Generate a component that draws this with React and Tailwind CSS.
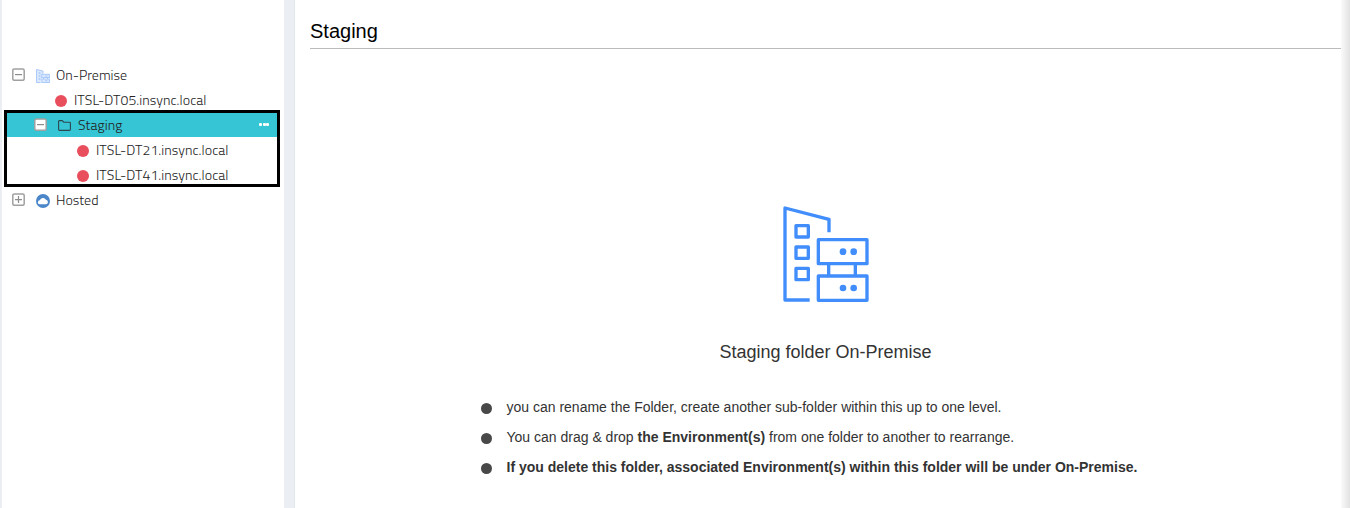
function Toggle({ open }) {
  return (
    <svg className="h-[13px] w-[13px] shrink-0" viewBox="0 0 13 13" fill="none">
      <rect x="0.8" y="0.9" width="11.4" height="11.4" rx="1.5" fill="#fff" stroke="#a0a0a0" strokeWidth="1.5" />
      <path d={open ? 'M3 6.6H10' : 'M3 6.6H10M6.5 3.1V10.1'} stroke="#8c8c8c" strokeWidth="1.2" />
    </svg>
  );
}

function BuildingIcon() {
  return (
    <svg className="h-[14px] w-[14px] shrink-0" viewBox="0 0 14 14" fill="none" stroke="#a9cafb" strokeWidth="1">
      <path d="M4.5 13.5H0.5V0.5L7 2V4.5" fill="#dce9fd" />
      <path d="M2.5 4H4.5M2.5 7H4.5M2.5 10H4.5" strokeWidth="1.5" />
      <rect x="5.8" y="5.3" width="7.6" height="3.2" fill="#dce9fd" />
      <rect x="5.8" y="10" width="7.6" height="3.5" fill="#dce9fd" />
      <path d="M7.5 8.5V10M11.5 8.5V10M9 7H11.5M9 11.8H11.5" />
    </svg>
  );
}

function CloudIcon() {
  return (
    <svg className="h-[14px] w-[14px] shrink-0" viewBox="0 0 14 14">
      <circle cx="7" cy="7" r="7" fill="#4b86c9" />
      <path d="M4 10.3a2 2 0 0 1-.2-4A3.4 3.4 0 0 1 10 5.8a2.3 2.3 0 0 1 .2 4.5Z" fill="#fff" />
    </svg>
  );
}

function FolderIcon() {
  return (
    <svg className="h-[11px] w-[13px] shrink-0" viewBox="0 0 13 11" fill="none" stroke="#2c4650" strokeWidth="1.1" strokeLinejoin="round">
      <path d="M.6 1.3Q.6.6 1.3.6H4.3L5.7 2.2H11.5Q12.4 2.2 12.4 3.1V9.5Q12.4 10.4 11.5 10.4H1.5Q.6 10.4.6 9.5Z" />
    </svg>
  );
}

function Host({ name, nested }) {
  return (
    <div className={nested ? 'flex h-[25px] items-center pl-[75px]' : 'flex h-[25px] items-center pl-[53px]'}>
      <span className="mt-[2px] h-3 w-3 shrink-0 rounded-full bg-[#e84e5c]" />
      <span className="ml-[7px] tracking-[0.06px]">{name}</span>
    </div>
  );
}

function Sidebar() {
  return (
    <aside className="w-[284px] shrink-0 border-l-2 border-[#ebeff3] pt-[62px] font-['Titillium_Web','Roboto',sans-serif] text-[14px] font-light leading-[25px] text-[#222]">
      <div className="flex h-[25px] items-center pl-[10px]">
        <Toggle open />
        <span className="ml-[11px] mt-[2px] flex"><BuildingIcon /></span>
        <span className="ml-[6px]">On-Premise</span>
      </div>
      <Host name="ITSL-DT05.insync.local" />
      <div className="relative">
        <div className="ml-[5px] mr-[7px] flex h-[25px] items-center bg-[#36c5d5] pl-[27px] pr-[8px]">
          <Toggle open />
          <span className="ml-[11px] mt-px flex"><FolderIcon /></span>
          <span className="ml-[7px] tracking-[0.08px]">Staging</span>
          <span className="ml-auto flex gap-[0.5px]">
            <i className="h-[3px] w-[3px] rounded-[1px] bg-white" />
            <i className="h-[3px] w-[3px] rounded-[1px] bg-white" />
            <i className="h-[3px] w-[3px] rounded-[1px] bg-white" />
          </span>
        </div>
        <Host name="ITSL-DT21.insync.local" nested />
        <Host name="ITSL-DT41.insync.local" nested />
        <div className="pointer-events-none absolute -top-[2px] bottom-0 left-[2px] right-[4px] border-[3px] border-black" />
      </div>
      <div className="flex h-[25px] items-center pl-[10px]">
        <Toggle />
        <span className="ml-[11px] mt-[2px] flex"><CloudIcon /></span>
        <span className="ml-[6px]">Hosted</span>
      </div>
    </aside>
  );
}

function ServersArt() {
  return (
    <svg className="h-[120px] w-[115px]" viewBox="0 0 345 360" fill="none" stroke="#418dfc" strokeWidth="10" strokeLinejoin="round">
      <path d="M119 315H45V39L177 73V112" />
      <rect x="78" y="92" width="37" height="34" />
      <rect x="78" y="156" width="37" height="34" />
      <rect x="78" y="220" width="37" height="34" />
      <rect x="145" y="134" width="146" height="72" />
      <rect x="145" y="243" width="146" height="73" />
      <path d="M176 206V243M256 206V243" />
      <g fill="#418dfc" stroke="none">
        <circle cx="219" cy="170" r="10" />
        <circle cx="251" cy="170" r="10" />
        <circle cx="219" cy="279" r="10" />
        <circle cx="251" cy="279" r="10" />
      </g>
    </svg>
  );
}

function Note({ children }) {
  return (
    <li className="flex h-[30px] items-center">
      <span className="mt-[2px] h-[11px] w-[11px] shrink-0 rounded-full bg-[#484848]" />
      <span className="ml-[15px] whitespace-nowrap">{children}</span>
    </li>
  );
}

export default function App() {
  return (
    <div className="flex h-[508px] w-full overflow-hidden bg-white">
      <Sidebar />
      <div className="w-[11px] shrink-0 border-r border-[#e2e7ec] bg-[#ebeff3]" />
      <main className="flex min-w-0 flex-1 flex-col pl-[15px] font-['Liberation_Sans',Arial,sans-serif] text-[#333]">
        <h1 className="h-[49px] border-b border-[#bbb] pt-[16px] text-[20px] leading-[30px] text-black">Staging</h1>
        <div className="flex flex-col items-center pt-[146px]">
          <div className="mr-[-4px]"><ServersArt /></div>
          <h2 className="mt-[24px] text-[18px] leading-[26px]">Staging folder On-Premise</h2>
          <ul className="mt-[27px] w-[690px] text-[14px]">
            <Note>you can rename the Folder, create another sub-folder within this up to one level.</Note>
            <Note>You can drag &amp; drop <b>the Environment(s)</b> from one folder to another to rearrange.</Note>
            <Note><b>If you delete this folder, associated Environment(s) within this folder will be under On-Premise.</b></Note>
          </ul>
        </div>
      </main>
      <div className="w-[9px] shrink-0 bg-gradient-to-r from-[#fafafa] to-[#e2e2e2]" />
    </div>
  );
}
